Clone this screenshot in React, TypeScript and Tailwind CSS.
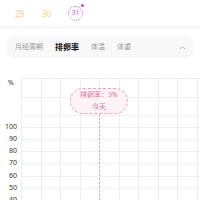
import React from "react"

const cjk = { fontFamily: '"Noto Sans", "Noto Sans CJK SC", sans-serif' }

const hLines = [78, 97, 115, 127, 139, 151, 163, 176, 188, 200]
const yLabels = [
  { v: "100", y: 127 },
  { v: "90", y: 139 },
  { v: "80", y: 151 },
  { v: "70", y: 163 },
  { v: "60", y: 176 },
  { v: "50", y: 188 },
  { v: "40", y: 200 },
]

function Chart() {
  const cols = Array.from({ length: 10 }, (_, i) => 21 + i * 19.5)
  return (
    <div className="relative h-[130px] w-[200px]">
      <svg className="absolute left-0 top-0" width="200" height="130">
        {hLines.map((y) => (
          <line key={y} x1="21" x2="200" y1={y - 70 + 0.5} y2={y - 70 + 0.5} stroke="#eeeeee" strokeWidth="1" />
        ))}
        {cols.map((x) => (
          <line key={x} x1={Math.round(x) + 0.5} x2={Math.round(x) + 0.5} y1="8" y2="130" stroke="#eeeeee" strokeWidth="1" />
        ))}
        <line x1="99.5" x2="99.5" y1="44" y2="130" stroke="#e59bbb" strokeWidth="1" strokeDasharray="2 2" />
      </svg>
      <span className="absolute left-[8px] top-[8px] text-[7px] text-[#333]" style={cjk}>%</span>
      {yLabels.map((l) => (
        <span
          key={l.v}
          className="absolute right-[183px] text-[7px] leading-none text-[#333]"
          style={{ ...cjk, top: l.y - 70 - 4 }}
        >
          {l.v}
        </span>
      ))}
      <div className="absolute left-[70px] top-[18px] flex h-[26px] w-[58px] flex-col items-center justify-center rounded-full border border-dashed border-[#e8a3c2] bg-[#fdf3f7] text-[7px] leading-[12px] text-[#d7709c]" style={cjk}>
        <span>排卵率：3%</span>
        <span>今天</span>
      </div>
    </div>
  )
}

export default function App() {
  return (
    <div className="h-[200px] w-[200px] overflow-hidden bg-white" style={cjk}>
      <div className="relative flex h-[28px] items-center border-b border-[#f3f3f3] text-[8px]">
        <span className="ml-[15px] w-[9px] text-[#f5cd8c]">29</span>
        <span className="ml-[18px] w-[9px] text-[#f5cd8c]">30</span>
        <span className="ml-[17px] flex h-[15px] w-[15px] items-center justify-center rounded-full border border-dotted border-[#d968dc] text-[7px] text-[#c94fd0]">31</span>
        <span className="absolute left-[81px] top-[4px] h-[3px] w-[3px] rounded-full bg-[#d53ce8]" />
      </div>
      <div className="mx-[7px] mt-[8px] flex h-[22px] items-center rounded-[7px] bg-[#f8f8f8] pl-[8px] pr-[7px] text-[7px] text-[#999]">
        <span>月经周期</span>
        <span className="ml-[12px] text-[8px] font-bold text-[#111]">排卵率</span>
        <span className="ml-[12px]">体温</span>
        <span className="ml-[12px]">体重</span>
        <svg className="ml-auto" width="7" height="5" viewBox="0 0 7 5">
          <path d="M1 4 L3.5 1.5 L6 4" fill="none" stroke="#aaa" strokeWidth="0.8" />
        </svg>
      </div>
      <div className="mt-[12px]">
        <Chart />
      </div>
    </div>
  )
}
